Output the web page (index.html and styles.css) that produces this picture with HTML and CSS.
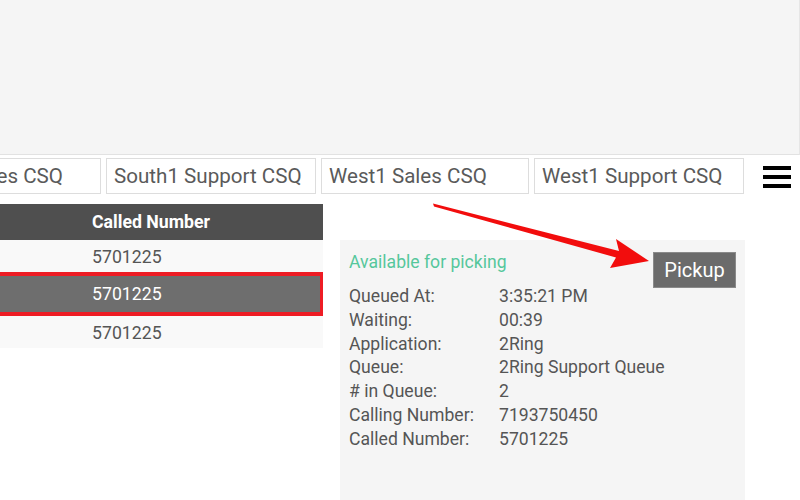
FILE: index.html
```html
<!DOCTYPE html>
<html>
<head>
<meta charset="utf-8">
<link rel="stylesheet" href="styles.css">
</head>
<body>
<div class="page">
  <div class="top"></div>
  <div class="tabs">
    <div class="tab tab-first">East1 Sales CSQ</div>
    <div class="tab">South1 Support CSQ</div>
    <div class="tab tab-narrow">West1 Sales CSQ</div>
    <div class="tab">West1 Support CSQ</div>
    <div class="menu"><span></span><span></span><span></span></div>
  </div>
  <div class="main">
    <table class="calls">
      <thead>
        <tr><th class="c1">Calling Number</th><th class="c2">Called Number</th></tr>
      </thead>
      <tbody>
        <tr><td class="c1">7193750451</td><td class="c2">5701225</td></tr>
        <tr class="selected"><td class="c1">7193750450</td><td class="c2">5701225</td></tr>
        <tr><td class="c1">7193750452</td><td class="c2">5701225</td></tr>
      </tbody>
    </table>
    <div class="card">
      <div class="card-head">
        <div class="status">Available for picking</div>
        <button class="pickup">Pickup</button>
      </div>
      <dl class="info">
        <dt>Queued At:</dt><dd>3:35:21 PM</dd>
        <dt>Waiting:</dt><dd>00:39</dd>
        <dt>Application:</dt><dd>2Ring</dd>
        <dt>Queue:</dt><dd>2Ring Support Queue</dd>
        <dt># in Queue:</dt><dd>2</dd>
        <dt>Calling Number:</dt><dd>7193750450</dd>
        <dt>Called Number:</dt><dd>5701225</dd>
      </dl>
    </div>
  </div>
  <svg class="arrow" width="800" height="500" viewBox="0 0 800 500">
    <polygon points="433,203.5 619,251 616,239 649,261 610,268 616,257.5 434,206.5" fill="#f20d0d"/>
  </svg>
</div>
</body>
</html>
```

FILE: styles.css
```css
html, body {
  margin: 0;
  padding: 0;
  background: #ffffff;
}
body {
  width: 800px;
  height: 500px;
  overflow: hidden;
  font-family: Roboto, "Liberation Sans", sans-serif;
  color: #555555;
}
.page {
  position: relative;
  width: 800px;
  height: 500px;
  overflow: hidden;
  box-sizing: border-box;
}
.top {
  height: 154px;
  background: #f5f5f5;
  border-bottom: 1px solid #e2e2e2;
  border-right: 1px solid #e6e6e6;
}
.tabs {
  display: flex;
  align-items: center;
  gap: 5px;
  margin-top: 3px;
  margin-left: -108px;
  height: 36px;
}
.tab {
  flex: none;
  box-sizing: border-box;
  width: 210px;
  height: 36px;
  border: 1px solid #dddddd;
  padding: 0 7px;
  font-size: 20.6px;
  line-height: 34px;
  color: #5a5a5a;
  white-space: nowrap;
  overflow: hidden;
}
.tab-first {
  width: 209px;
  text-align: right;
  padding-right: 37px;
}
.tab-narrow {
  width: 208px;
}
.menu {
  display: flex;
  flex-direction: column;
  gap: 5px;
  margin-left: 14px;
  margin-top: 2px;
}
.menu span {
  display: block;
  width: 28px;
  height: 4px;
  background: #000000;
}
.main {
  display: flex;
  align-items: flex-start;
  gap: 17px;
  margin-top: 10px;
  margin-left: -240px;
  height: 306px;
}
.calls {
  flex: none;
  width: 563px;
  border-collapse: separate;
  border-spacing: 0;
  font-size: 17.7px;
}
.calls th, .calls td {
  text-align: left;
  padding: 0 8px;
  white-space: nowrap;
}
.calls .c1 {
  width: 308px;
}
.calls th {
  background: #4f4f4f;
  color: #ffffff;
  font-weight: 700;
  height: 36px;
  font-size: 17.7px;
}
.calls td {
  background: #f9f9f9;
  height: 32px;
  padding-top: 2px;
  box-sizing: border-box;
}
.calls .selected td {
  background: #6e6e6e;
  color: #ffffff;
  height: 44px;
  padding-top: 0;
  border-top: 4px solid #ee1c24;
  border-bottom: 4px solid #ee1c24;
}
.calls .selected td.c2 {
  border-right: 3px solid #ee1c24;
}
.card {
  flex: none;
  box-sizing: border-box;
  width: 405px;
  height: 260px;
  margin-top: 36px;
  background: #f5f5f5;
  padding: 10px 9px 0 9px;
  font-size: 17.6px;
}
.card-head {
  display: flex;
  justify-content: space-between;
  align-items: flex-start;
  height: 35px;
}
.pickup {
  flex: none;
  margin-top: 2px;
  width: 83px;
  height: 36px;
  background: #6b6b6b;
  border: 1px solid #8a8a8a;
  color: #ffffff;
  font-family: Roboto, "Liberation Sans", sans-serif;
  font-size: 20px;
  padding: 0;
}
.status {
  color: #55c79c;
  line-height: 24px;
}
.info {
  display: grid;
  grid-template-columns: 150px 1fr;
  margin: 0;
  line-height: 23.8px;
}
.info dt, .info dd {
  margin: 0;
}
.arrow {
  position: absolute;
  left: 0;
  top: 0;
  pointer-events: none;
}
```
